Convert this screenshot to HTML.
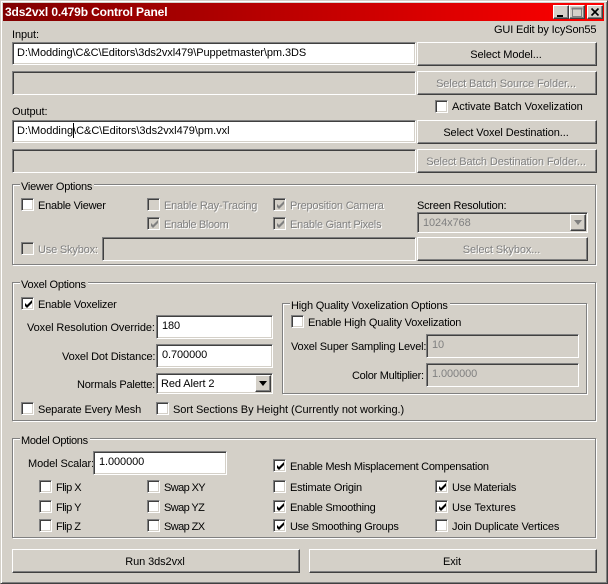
<!DOCTYPE html>
<html><head><meta charset="utf-8"><style>
html,body{margin:0;padding:0;background:#d4d0c8}
body{width:608px;height:584px;overflow:hidden;position:relative;font:11px/13px "Liberation Sans",sans-serif;letter-spacing:-.09px;color:#000}
div,span{position:absolute;box-sizing:border-box;white-space:nowrap}
span{margin-top:1px}
.win{left:0;top:0;width:608px;height:584px;border:1px solid;border-color:#d4d0c8 #404040 #404040 #d4d0c8;box-shadow:inset 1px 1px #fff,inset -1px -1px #808080}
.title{left:3px;top:3px;width:601px;height:18px;background:linear-gradient(90deg,#800000,#ff0000);color:#fff;font:bold 12px/18px "Liberation Sans",sans-serif;letter-spacing:-.13px;padding-left:2px}
.tb{top:5px;width:16px;height:14px;background:#d4d0c8;border:1px solid;border-color:#fff #404040 #404040 #fff;box-shadow:inset -1px -1px #808080}
.e{background:#fff;border:1px solid;border-color:#808080 #fff #fff #808080;box-shadow:inset 1px 1px #404040,inset -1px -1px #d4d0c8;padding:4px 0 0 4px}
.n{padding-left:5px}
.ed{background:#d4d0c8;color:#808080}
.b{background:#d4d0c8;border:1px solid;border-color:#fff #404040 #404040 #fff;box-shadow:inset -1px -1px #808080;text-align:center;line-height:24px;padding-right:2px}
.d{color:#808080;text-shadow:1px 1px 0 #fff}
.g{border:1px solid #808080;box-shadow:1px 1px 0 #fff,inset 1px 1px 0 #fff}
.l{background:#d4d0c8;padding:0 2px 0 1px;margin-top:0;height:14px;line-height:15px}
.c{width:13px;height:13px;background:#fff;border:1px solid;border-color:#808080 #fff #fff #808080;box-shadow:inset 1px 1px #404040,inset -1px -1px #d4d0c8}
.cd{background:#d4d0c8}
.c svg{position:absolute;left:2px;top:2px}
</style></head><body>
<div class="win"></div>
<div class="title">3ds2vxl 0.479b Control Panel</div>
<div class="tb" style="left:553px"><svg width="14" height="12" style="position:absolute;left:0;top:0"><path d="M3 9h6v2H3z" fill="#000"/></svg></div>
<div class="tb" style="left:569px"><svg width="14" height="12" style="position:absolute;left:0;top:0"><path d="M2.5 2.5h9v8h-9zM2 2h10v1H2z" fill="none" stroke="#808080"/></svg></div>
<div class="tb" style="left:587px"><svg width="14" height="12" style="position:absolute;left:0;top:0"><path d="M3.5 2.5l7 7M10.500 2.500l-7 7" stroke="#000" stroke-width="1.600" fill="none"/></svg></div>

<span style="left:494px;top:23px;letter-spacing:-.14px">GUI Edit by IcySon55</span>
<span style="left:12px;top:28px">Input:</span>
<div class="e" style="left:12px;top:42px;width:404px;height:23px;letter-spacing:-.07px">D:\Modding\C&amp;C\Editors\3ds2vxl479\Puppetmaster\pm.3DS</div>
<div class="b" style="left:417px;top:42px;width:180px;height:24px">Select Model...</div>
<div class="e ed" style="left:12px;top:71px;width:404px;height:24px"></div>
<div class="b d" style="left:417px;top:71px;width:180px;height:24px">Select Batch Source Folder...</div>
<div class="c" style="left:435px;top:100px"></div>
<span style="left:452px;top:100px;letter-spacing:-.05px">Activate Batch Voxelization</span>
<span style="left:12px;top:105px">Output:</span>
<div class="e" style="left:12px;top:120px;width:404px;height:23px;letter-spacing:-.02px">D:\Modding\C&amp;C\Editors\3ds2vxl479\pm.vxl</div>
<div style="left:73px;top:123px;width:1px;height:15px;background:#000"></div>
<div class="b" style="left:417px;top:120px;width:180px;height:24px">Select Voxel Destination...</div>
<div class="e ed" style="left:12px;top:149px;width:404px;height:24px"></div>
<div class="b d" style="left:417px;top:149px;width:180px;height:24px">Select Batch Destination Folder...</div>

<div class="g" style="left:12px;top:184px;width:584px;height:81px"></div>
<span class="l" style="left:20px;top:180px;letter-spacing:-.23px">Viewer Options</span>
<div class="c" style="left:21px;top:198px"></div><span style="left:38px;top:199px;letter-spacing:-.24px">Enable Viewer</span>
<div class="c cd" style="left:147px;top:198px"></div><span class="d" style="left:164px;top:199px;letter-spacing:-.2px">Enable Ray-Tracing</span>
<div class="c cd" style="left:147px;top:217px"><svg width="9" height="9"><path d="M1 3v3l2 2 5-5V0L3 5z" fill="#808080"/></svg></div><span class="d" style="left:164px;top:218px;letter-spacing:-.34px">Enable Bloom</span>
<div class="c cd" style="left:273px;top:198px"><svg width="9" height="9"><path d="M1 3v3l2 2 5-5V0L3 5z" fill="#808080"/></svg></div><span class="d" style="left:290px;top:199px;letter-spacing:-.2px">Preposition Camera</span>
<div class="c cd" style="left:273px;top:217px"><svg width="9" height="9"><path d="M1 3v3l2 2 5-5V0L3 5z" fill="#808080"/></svg></div><span class="d" style="left:290px;top:218px;letter-spacing:-.25px">Enable Giant Pixels</span>
<span style="left:417px;top:199px;letter-spacing:-.2px">Screen Resolution:</span>
<div class="e ed n" style="left:417px;top:212px;width:171px;height:21px">1024x768</div>
<div class="b" style="left:570px;top:214px;width:16px;height:17px"><svg width="14" height="15" style="position:absolute;left:0;top:0"><path d="M3 5h8L7 10z" fill="#808080"/></svg></div>
<div class="c cd" style="left:21px;top:242px"></div><span class="d" style="left:38px;top:243px;letter-spacing:-.18px">Use Skybox:</span>
<div class="e ed" style="left:102px;top:237px;width:314px;height:24px"></div>
<div class="b d" style="left:417px;top:237px;width:171px;height:24px">Select Skybox...</div>

<div class="g" style="left:12px;top:282px;width:584px;height:139px"></div>
<span class="l" style="left:20px;top:278px;letter-spacing:-.24px">Voxel Options</span>
<div class="c" style="left:21px;top:297px"><svg width="9" height="9"><path d="M1 3v3l2 2 5-5V0L3 5z" fill="#000"/></svg></div><span style="left:38px;top:298px;letter-spacing:-.21px">Enable Voxelizer</span>
<span style="left:27px;top:321px">Voxel Resolution Override:</span>
<div class="e n" style="left:156px;top:315px;width:117px;height:24px">180</div>
<span style="left:62px;top:350px;letter-spacing:-.14px">Voxel Dot Distance:</span>
<div class="e n" style="left:156px;top:344px;width:117px;height:24px">0.700000</div>
<span style="left:77px;top:378px;letter-spacing:-.21px">Normals Palette:</span>
<div class="e" style="left:156px;top:373px;width:117px;height:21px">Red Alert 2</div>
<div class="b" style="left:255px;top:375px;width:16px;height:17px"><svg width="14" height="15" style="position:absolute;left:0;top:0"><path d="M3 5h8L7 10z" fill="#000"/></svg></div>
<div class="g" style="left:282px;top:303px;width:305px;height:91px"></div>
<span class="l" style="left:290px;top:299px;letter-spacing:-.18px">High Quality Voxelization Options</span>
<div class="c" style="left:291px;top:315px"></div><span style="left:308px;top:316px;letter-spacing:-.18px">Enable High Quality Voxelization</span>
<span style="left:291px;top:340px;letter-spacing:-.2px">Voxel Super Sampling Level:</span>
<div class="e ed n" style="left:426px;top:334px;width:153px;height:24px">10</div>
<span style="left:352px;top:369px;letter-spacing:-.27px">Color Multiplier:</span>
<div class="e ed n" style="left:426px;top:363px;width:153px;height:24px">1.000000</div>
<div class="c" style="left:21px;top:402px"></div><span style="left:38px;top:403px;letter-spacing:-.14px">Separate Every Mesh</span>
<div class="c" style="left:156px;top:402px"></div><span style="left:173px;top:403px;letter-spacing:-.05px">Sort Sections By Height (Currently not working.)</span>

<div class="g" style="left:12px;top:438px;width:584px;height:100px"></div>
<span class="l" style="left:20px;top:434px;letter-spacing:-.32px">Model Options</span>
<span style="left:28px;top:457px">Model Scalar:</span>
<div class="e n" style="left:93px;top:451px;width:134px;height:24px">1.000000</div>
<div class="c" style="left:39px;top:480px"></div><span style="left:56px;top:481px;letter-spacing:-.5px">Flip X</span>
<div class="c" style="left:39px;top:500px"></div><span style="left:56px;top:501px;letter-spacing:-.5px">Flip Y</span>
<div class="c" style="left:39px;top:519px"></div><span style="left:56px;top:520px;letter-spacing:-.5px">Flip Z</span>
<div class="c" style="left:147px;top:480px"></div><span style="left:164px;top:481px;letter-spacing:-.6px">Swap XY</span>
<div class="c" style="left:147px;top:500px"></div><span style="left:164px;top:501px;letter-spacing:-.6px">Swap YZ</span>
<div class="c" style="left:147px;top:519px"></div><span style="left:164px;top:520px;letter-spacing:-.6px">Swap ZX</span>
<div class="c" style="left:273px;top:459px"><svg width="9" height="9"><path d="M1 3v3l2 2 5-5V0L3 5z" fill="#000"/></svg></div><span style="left:290px;top:460px;letter-spacing:-.28px">Enable Mesh Misplacement Compensation</span>
<div class="c" style="left:273px;top:480px"></div><span style="left:290px;top:481px;letter-spacing:-.22px">Estimate Origin</span>
<div class="c" style="left:273px;top:500px"><svg width="9" height="9"><path d="M1 3v3l2 2 5-5V0L3 5z" fill="#000"/></svg></div><span style="left:290px;top:501px;letter-spacing:-.28px">Enable Smoothing</span>
<div class="c" style="left:273px;top:519px"><svg width="9" height="9"><path d="M1 3v3l2 2 5-5V0L3 5z" fill="#000"/></svg></div><span style="left:290px;top:520px;letter-spacing:-.29px">Use Smoothing Groups</span>
<div class="c" style="left:435px;top:480px"><svg width="9" height="9"><path d="M1 3v3l2 2 5-5V0L3 5z" fill="#000"/></svg></div><span style="left:452px;top:481px;letter-spacing:-.24px">Use Materials</span>
<div class="c" style="left:435px;top:500px"><svg width="9" height="9"><path d="M1 3v3l2 2 5-5V0L3 5z" fill="#000"/></svg></div><span style="left:452px;top:501px;letter-spacing:-.01px">Use Textures</span>
<div class="c" style="left:435px;top:519px"></div><span style="left:452px;top:520px;letter-spacing:-.18px">Join Duplicate Vertices</span>

<div class="b" style="left:12px;top:549px;width:288px;height:24px">Run 3ds2vxl</div>
<div class="b" style="left:309px;top:549px;width:288px;height:24px">Exit</div>
</body></html>
